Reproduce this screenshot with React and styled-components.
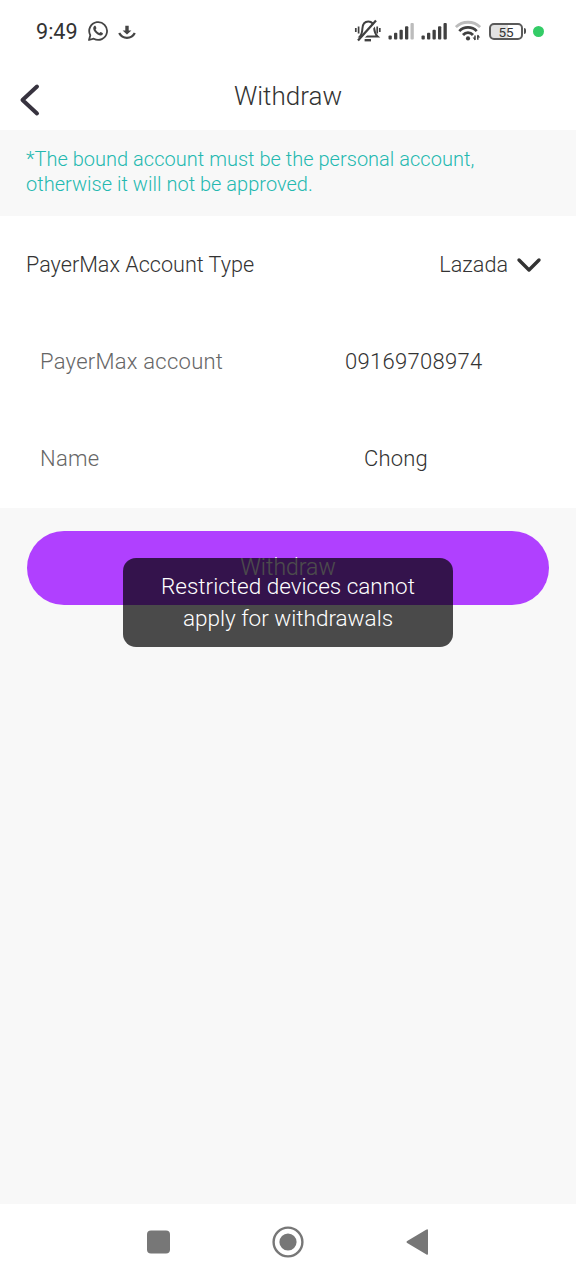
import React from 'react'
import styled, { createGlobalStyle } from 'styled-components'

const App = () => {
    return (
        <>
            <GlobalStyle />
            <Screen>
                <StatusBar />
                <Header>
                    <BackButton aria-label="Back">
                        <svg width="22" height="34" viewBox="0 0 22 34">
                            <path d="M18 3.5L3.5 17L18 30.5" />
                        </svg>
                    </BackButton>
                    <Title>Withdraw</Title>
                </Header>

                <Notice>
                    *The bound account must be the personal account,
                    <br />
                    otherwise it will not be approved.
                </Notice>

                <Form>
                    <TypeRow>
                        <span>PayerMax Account Type</span>
                        <Select>
                            Lazada
                            <svg width="26" height="16" viewBox="0 0 26 16">
                                <path d="M3 3L13 13L23 3" />
                            </svg>
                        </Select>
                    </TypeRow>
                    <Field>
                        <Label $spacing="0.25px">PayerMax account</Label>
                        <Value $spacing="0.3px" $start="345px">09169708974</Value>
                    </Field>
                    <Field>
                        <Label $spacing="0.25px">Name</Label>
                        <Value $spacing="0.2px" $start="364px">Chong</Value>
                    </Field>
                </Form>

                <Actions>
                    <SubmitButton>Withdraw</SubmitButton>
                    <Toast>
                        Restricted devices cannot
                        <br />
                        apply for withdrawals
                    </Toast>
                </Actions>

                <SystemNav>
                    <svg width="24" height="24" viewBox="0 0 24 24">
                        <rect x="1" y="0.5" width="23" height="23" rx="4" />
                    </svg>
                    <svg width="32" height="32" viewBox="0 0 32 32">
                        <circle className="ring" cx="16" cy="16" r="14.4" />
                        <circle cx="16" cy="16" r="8.6" />
                    </svg>
                    <svg width="22" height="28" viewBox="0 0 22 28">
                        <path d="M22 2.4V25.6Q22 27.6 20.1 26.3L1.2 15Q-0.2 14 1.2 13L20.1 1.7Q22 0.5 22 2.4Z" />
                    </svg>
                </SystemNav>
            </Screen>
        </>
    )
}

const StatusBar = () => {
    return (
        <Status>
            <StatusLeft>
                <Clock>9:49</Clock>
                {/* whatsapp */}
                <svg width="22" height="22" viewBox="0 0 22 22">
                    <path
                        d="M2 20L3.3 15.2A8.9 8.9 0 1 1 6.7 18.7Z"
                        fill="none"
                        stroke="#454545"
                        strokeWidth="1.8"
                        strokeLinejoin="round"
                    />
                    <path
                        d="M7.2 6.1C7.7 5.6 8.4 5.6 8.7 6.2L9.4 7.9C9.6 8.5 8.6 9.1 8.7 9.4C9.3 10.9 10.6 12.2 12.2 12.9C12.7 13.1 13.2 11.9 13.8 12.1L15.6 13C16.1 13.3 16 14.2 15.4 14.8C14.5 15.8 12.8 15.8 10.6 14.4C8.4 13 6.9 11.1 6.4 9.4C6 8 6.4 6.9 7.2 6.1Z"
                        fill="#454545"
                    />
                </svg>
                {/* download */}
                <svg className="download" width="18" height="16" viewBox="0 0 18 16">
                    <path d="M7.3 0.8H10.7V5.6H13.4L9 9.6L4.6 5.6H7.3Z" fill="#454545" />
                    <path d="M1.2 8C4.6 14.4 13.4 14.4 16.8 8" fill="none" stroke="#454545" strokeWidth="2.3" />
                </svg>
            </StatusLeft>
            <StatusRight>
                {/* muted bell */}
                <svg width="28" height="26" viewBox="0 0 28 26" fill="none" stroke="#404040" strokeWidth="2">
                    <path d="M6 18.4H23.6C21.2 16.3 20.5 14.3 20.2 10.5C19.9 5.9 17.8 3.5 14.3 3.5C10.8 3.5 8.7 5.9 8.4 10.5C8.2 14.3 8 16.3 6 18.4Z" />
                    <path d="M10.6 22.2H17" strokeWidth="2.4" />
                    <path d="M23.4 3.9L5.6 23.6" stroke="#fff" strokeWidth="2.6" />
                    <path d="M22 2.4L4 22.6" strokeWidth="2.3" />
                    <path d="M4.6 8.4V15.4M1.8 10.1V13.9M23.2 8.4V15.4M25.8 10.1V13.9" strokeWidth="1.7" />
                </svg>
                <Signal weak />
                <Signal />
                {/* wifi */}
                <svg className="wifi" width="26" height="22" viewBox="0 0 26 22" fill="none" stroke="#404040" strokeWidth="2.8">
                    <path d="M0.9 7.1C7.4 0.6 18.6 0.6 25.1 7.1" stroke="#bcbcbc" />
                    <path d="M4.3 11.1C9 6.2 17 6.2 21.7 11.1" />
                    <path d="M8 15C10.8 11.9 15.2 11.9 18 15" />
                    <circle cx="13" cy="18.4" r="2.1" fill="#404040" stroke="none" />
                    <path d="M20 15.4V20M22.8 15.2V19.8" strokeWidth="1.5" />
                    <path d="M17.6 17.6L20 20.6V17.6ZM25.2 17.4L22.8 14.4V17.4Z" fill="#404040" stroke="none" />
                </svg>
                <Battery>
                    <BatteryBody>55</BatteryBody>
                    <BatteryTip />
                </Battery>
                <PrivacyDot />
            </StatusRight>
        </Status>
    )
}

const Signal = ({ weak }) => {
    return (
        <svg className="signal" width="27" height="20" viewBox="0 0 27 20" fill="#404040">
            <rect x="0.5" y="14.6" width="3.3" height="3.9" rx="1" />
            <rect x="6" y="11.8" width="3.3" height="6.7" rx="1" />
            <rect x="11.5" y="8.8" width="3.3" height="9.7" rx="1" />
            <rect x="17" y="5.3" width="3.3" height="13.2" rx="1" />
            <rect x="22.5" y="2" width="3.3" height="16.5" rx="1" fill={weak ? '#bcbcbc' : '#404040'} />
        </svg>
    )
}

export default App

const GlobalStyle = createGlobalStyle`
* {
    box-sizing: border-box;
}
body {
    margin: 0;
    background: #f8f8f8;
    font-family: Roboto, sans-serif;
    font-weight: 300;
}
svg {
    display: block;
    flex-shrink: 0;
}
`

const Screen = styled.div`
    width: 576px;
    height: 1280px;
    display: flex;
    flex-direction: column;
    overflow: hidden;
    background: #f8f8f8;
    color: #333;
`

const Status = styled.div`
    height: 62px;
    display: flex;
    justify-content: space-between;
    padding: 0 32px 0 36px;
    background: #fff;
`

const StatusLeft = styled.div`
    height: 62px;
    display: flex;
    align-items: center;

    .download {
        margin-left: 9px;
        margin-top: 4px;
    }
`

const Clock = styled.span`
    width: 51px;
    font-size: 21.6px;
    font-weight: 400;
    line-height: 26px;
    color: #333;
    padding-top: 2px;
`

const StatusRight = styled.div`
    height: 62px;
    display: flex;
    align-items: center;

    .signal {
        margin-left: 6px;
    }
    .wifi {
        margin-left: 7px;
    }
`

const Battery = styled.div`
    display: flex;
    align-items: center;
    margin-left: 8px;
`

const BatteryBody = styled.div`
    width: 34px;
    height: 17px;
    border: 2px solid #5a5a5a;
    border-radius: 5px;
    background: linear-gradient(90deg, #e2e2e2 55%, #fff 55%);
    font-size: 13.5px;
    font-weight: 400;
    line-height: 14px;
    text-align: center;
`

const BatteryTip = styled.div`
    width: 2px;
    height: 6px;
    margin-left: 1px;
    border-radius: 0 2px 2px 0;
    background: #505050;
`

const PrivacyDot = styled.div`
    width: 11px;
    height: 11px;
    margin-left: 7px;
    border-radius: 50%;
    background: #34cc67;
`

const Header = styled.header`
    height: 68px;
    display: grid;
    grid-template-columns: 60px 1fr 60px;
    background: #fff;
`

const BackButton = styled.button`
    display: flex;
    align-items: flex-start;
    padding: 21px 0 0 19px;
    border: none;
    background: none;

    path {
        fill: none;
        stroke: #37333f;
        stroke-width: 4;
        stroke-linecap: round;
        stroke-linejoin: round;
    }
`

const Title = styled.h1`
    margin: 0;
    padding-top: 18px;
    font-size: 26px;
    font-weight: 300;
    line-height: 32px;
    text-align: center;
`

const Notice = styled.p`
    height: 86px;
    margin: 0;
    padding: 17px 26px 0;
    font-size: 20px;
    line-height: 25px;
    letter-spacing: 0.02px;
    color: #24b8b0;
    white-space: nowrap;
`

const Form = styled.div`
    height: 292px;
    display: grid;
    grid-template-rows: repeat(3, 97px);
    background: #fff;
    font-size: 22px;
`

const TypeRow = styled.div`
    display: flex;
    align-items: center;
    justify-content: space-between;
    padding: 0 34px 0 26px;
    font-size: 21.6px;
`

const Select = styled.div`
    display: flex;
    align-items: center;
    gap: 8px;

    path {
        fill: none;
        stroke: #333;
        stroke-width: 3.4;
        stroke-linecap: round;
        stroke-linejoin: round;
    }
`

const Field = styled.div`
    display: flex;
    align-items: center;
    padding-left: 40px;
`

const Label = styled.span`
    color: #666;
    letter-spacing: ${(props) => props.$spacing};
`

const Value = styled.span`
    width: calc(576px - ${(props) => props.$start});
    margin-left: auto;
    letter-spacing: ${(props) => props.$spacing};
`

const Actions = styled.main`
    position: relative;
    flex: 1;
    padding: 23px 27px 0;
`

const SubmitButton = styled.button`
    width: 100%;
    height: 73.5px;
    display: block;
    padding: 0;
    border: none;
    border-radius: 37px;
    background: #b040ff;
    color: #fff;
    font-family: inherit;
    font-size: 23px;
    font-weight: 300;
`

const Toast = styled.div`
    position: absolute;
    top: 49.5px;
    left: 123px;
    width: 330px;
    height: 89.5px;
    padding-top: 12px;
    border-radius: 13px;
    background: rgba(0, 0, 0, 0.7);
    color: #fff;
    font-size: 22.5px;
    line-height: 32px;
    text-align: center;
`

const SystemNav = styled.nav`
    height: 76px;
    display: flex;
    align-items: center;
    justify-content: space-between;
    padding: 0 148px 0 146px;
    background: #fff;
    fill: #777;

    .ring {
        fill: none;
        stroke: #777;
        stroke-width: 2.4;
    }
`
